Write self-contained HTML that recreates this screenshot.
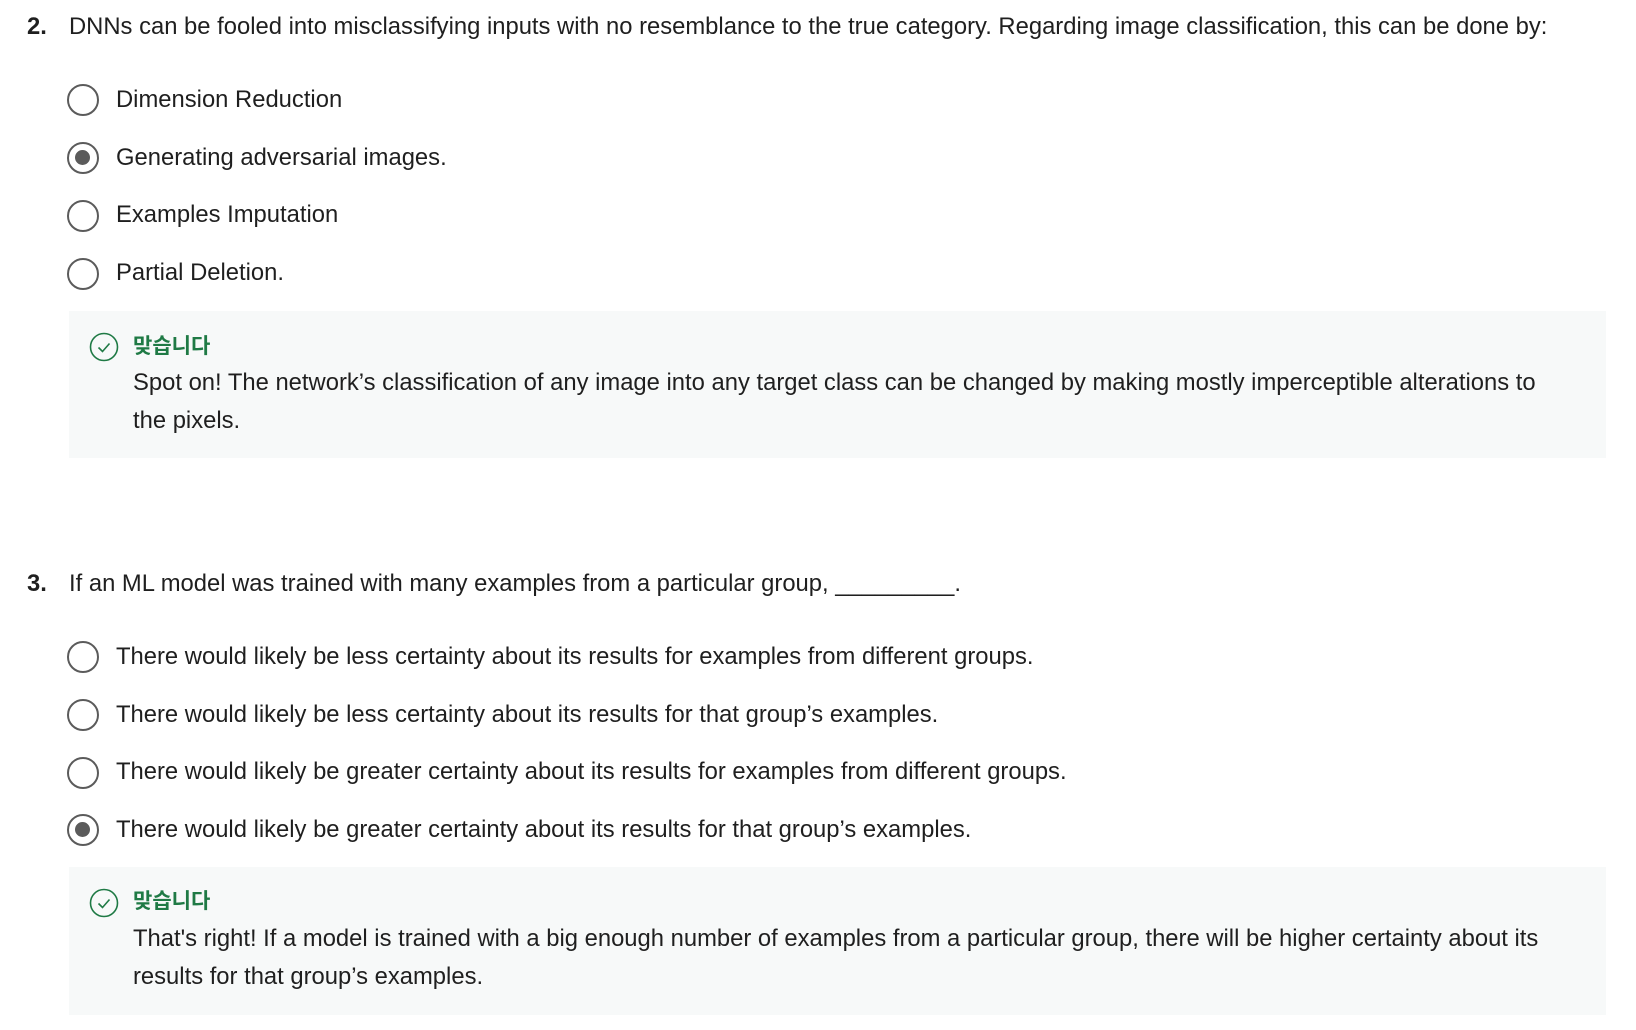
<!DOCTYPE html>
<html><head><meta charset="utf-8"><style>
body{margin:0;width:1636px;height:1030px;background:#fff;font-family:"Liberation Sans","Noto Sans CJK KR",sans-serif;color:#1f1f1f;position:relative;overflow:hidden}
.a{position:absolute;white-space:nowrap;font-size:23.8px;line-height:30px}
.n{font-weight:bold;left:27px}
.r{position:absolute;width:32px;height:32px;border:2.5px solid #5b5b5b;border-radius:50%;box-sizing:border-box;left:67px}
.r.s::after{content:"";position:absolute;left:6px;top:6px;width:15px;height:15px;border-radius:50%;background:#5b5b5b}
.box{position:absolute;left:69px;width:1537px;background:#f7f9f9}
.ok{color:#1f7a45;font-weight:bold;font-size:21px}
</style></head><body>
<div class="a n" style="top:12px">2.</div>
<div class="a" style="left:69px;top:12px">DNNs can be fooled into misclassifying inputs with no resemblance to the true category. Regarding image classification, this can be done by:</div>
<div class="r" style="top:84px"></div><div class="a" style="left:116px;top:85px">Dimension Reduction</div>
<div class="r s" style="top:142px"></div><div class="a" style="left:116px;top:143px">Generating adversarial images.</div>
<div class="r" style="top:200px"></div><div class="a" style="left:116px;top:200px">Examples Imputation</div>
<div class="r" style="top:258px"></div><div class="a" style="left:116px;top:258px">Partial Deletion.</div>
<div class="box" style="top:311px;height:147px"></div>
<svg style="position:absolute;left:89px;top:332px" width="30" height="30" viewBox="0 0 30 30"><circle cx="15" cy="15" r="13.5" fill="none" stroke="#1f7a45" stroke-width="1.6"/><path d="M9.5 15.5l4 4 7-8" fill="none" stroke="#1f7a45" stroke-width="1.6"/></svg>
<div class="a ok" style="left:133px;top:332px">맞습니다</div>
<div class="a" style="left:133px;top:368px">Spot on! The network’s classification of any image into any target class can be changed by making mostly imperceptible alterations to</div>
<div class="a" style="left:133px;top:406px">the pixels.</div>

<div class="a n" style="top:569px">3.</div>
<div class="a" style="left:69px;top:569px">If an ML model was trained with many examples from a particular group, _________.</div>
<div class="r" style="top:641px"></div><div class="a" style="left:116px;top:642px">There would likely be less certainty about its results for examples from different groups.</div>
<div class="r" style="top:699px"></div><div class="a" style="left:116px;top:700px">There would likely be less certainty about its results for that group’s examples.</div>
<div class="r" style="top:757px"></div><div class="a" style="left:116px;top:757px">There would likely be greater certainty about its results for examples from different groups.</div>
<div class="r s" style="top:814px"></div><div class="a" style="left:116px;top:815px">There would likely be greater certainty about its results for that group’s examples.</div>
<div class="box" style="top:867px;height:148px"></div>
<svg style="position:absolute;left:89px;top:888px" width="30" height="30" viewBox="0 0 30 30"><circle cx="15" cy="15" r="13.5" fill="none" stroke="#1f7a45" stroke-width="1.6"/><path d="M9.5 15.5l4 4 7-8" fill="none" stroke="#1f7a45" stroke-width="1.6"/></svg>
<div class="a ok" style="left:133px;top:887px">맞습니다</div>
<div class="a" style="left:133px;top:924px">That's right! If a model is trained with a big enough number of examples from a particular group, there will be higher certainty about its</div>
<div class="a" style="left:133px;top:962px">results for that group’s examples.</div>
</body></html>
